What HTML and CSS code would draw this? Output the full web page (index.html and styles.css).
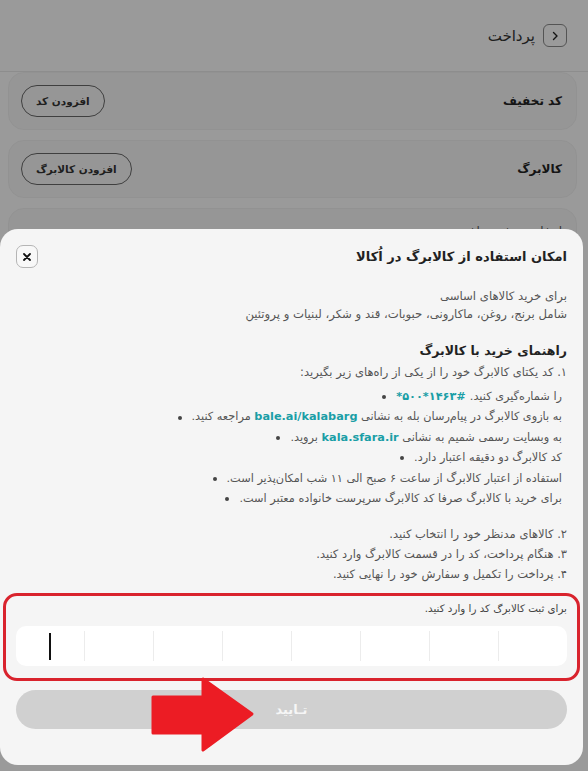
FILE: index.html
```html
<!DOCTYPE html>
<html lang="fa" dir="rtl">
  <head>
    <meta charset="UTF-8" />
    <meta name="viewport" content="width=device-width, initial-scale=1.0" />
    <title>پرداخت</title>
    <link rel="stylesheet" href="styles.css">
  </head>
  <body>
    <!-- صفحه پرداخت پشت پرده -->
    <div class="page">
      <header class="topbar">
        <span class="back">
          <svg width="10" height="10" viewBox="0 0 10 10"><path d="M3.5 1.5 L7 5 L3.5 8.5" fill="none" stroke="#222" stroke-width="1.4" stroke-linecap="round" stroke-linejoin="round"/></svg>
        </span>
        <span class="topbar-title">پرداخت</span>
      </header>
      <div class="card">
        <strong>کد تخفیف</strong>
        <button class="pill">افزودن کد</button>
      </div>
      <div class="card">
        <strong>کالابرگ</strong>
        <button class="pill">افزودن کالابرگ</button>
      </div>
      <div class="card card-top">
        <span class="muted">انتخاب روش پرداخت</span>
      </div>
    </div>

    <div class="overlay"></div>

    <!-- برگه کالابرگ -->
    <section class="sheet" role="dialog" aria-labelledby="sheetTitle">
      <div class="sheet-head">
        <h2 id="sheetTitle">امکان استفاده از کالابرگ در اُکالا</h2>
        <button class="close" aria-label="close">
          <svg width="10" height="10" viewBox="0 0 10 10"><path d="M2 2 L8 8 M8 2 L2 8" stroke="#111" stroke-width="1.8" stroke-linecap="round"/></svg>
        </button>
      </div>

      <p class="intro">برای خرید کالاهای اساسی<br>شامل برنج، روغن، ماکارونی، حبوبات، قند و شکر، لبنیات و پروتئین</p>

      <h3 class="guide-title">راهنمای خرید با کالابرگ</h3>
      <p class="step">۱. کد یکتای کالابرگ خود را از یکی از راه‌های زیر بگیرید:</p>
      <ul class="ways">
        <li><span>را شماره‌گیری کنید.</span><bdo dir="ltr" class="link">*۵۰۰*۱۴۶۳#</bdo><i class="dot"></i></li>
        <li><span>به بازوی کالابرگ در پیام‌رسان بله به نشانی <b class="link">bale.ai/kalabarg</b> مراجعه کنید.</span><i class="dot"></i></li>
        <li><span>به وبسایت رسمی شمیم به نشانی <b class="link">kala.sfara.ir</b> بروید.</span><i class="dot"></i></li>
        <li><span>کد کالابرگ دو دقیقه اعتبار دارد.</span><i class="dot"></i></li>
        <li><span>استفاده از اعتبار کالابرگ از ساعت ۶ صبح الی ۱۱ شب امکان‌پذیر است.</span><i class="dot"></i></li>
        <li><span>برای خرید با کالابرگ صرفا کد کالابرگ سرپرست خانواده معتبر است.</span><i class="dot"></i></li>
      </ul>
      <div class="steps">
        <p class="step">۲. کالاهای مدنظر خود را انتخاب کنید.</p>
        <p class="step">۳. هنگام پرداخت، کد را در قسمت کالابرگ وارد کنید.</p>
        <p class="step">۴. پرداخت را تکمیل و سفارش خود را نهایی کنید.</p>
      </div>

      <div class="code-box">
        <label class="code-label">برای ثبت کالابرگ کد را وارد کنید.</label>
        <div class="code-cells">
          <span class="cell"><i class="caret"></i></span>
          <span class="cell"></span>
          <span class="cell"></span>
          <span class="cell"></span>
          <span class="cell"></span>
          <span class="cell"></span>
          <span class="cell"></span>
          <span class="cell"></span>
        </div>
      </div>

      <button class="confirm" disabled>تـایید</button>

      <!-- فلش قرمز روی دکمه -->
      <svg class="arrow" width="110" height="80" viewBox="0 0 110 80">
        <path d="M3 21 H53 V3 L102 38 L53 74 V57 H3 Z" fill="#ec1c24" stroke="#ec1c24" stroke-width="3" stroke-linejoin="round"/>
      </svg>
    </section>
  </body>
</html>
```

FILE: styles.css
```css
* {
  box-sizing: border-box;
}
body {
  margin: 0;
  background: #f8f8f8;
  font-family: "DejaVu Sans", sans-serif;
  color: #333;
  direction: rtl;
}
button {
  font-family: inherit;
}

/* صفحه زیرین */
.topbar {
  height: 72px;
  display: flex;
  align-items: center;
  gap: 8px;
  padding: 0 21px 0 0;
  border-bottom: 1px solid #e4e4e4;
}
.back {
  width: 24px;
  height: 23px;
  border: 1px solid #888;
  border-radius: 6px;
  display: flex;
  align-items: center;
  justify-content: center;
}
.topbar-title {
  font-size: 15px;
  color: #333;
}
.card {
  height: 58px;
  margin: 0 11px 10px 8px;
  padding: 0 14px 0 12px;
  background: #f3f3f3;
  border: 1px solid #ececec;
  border-radius: 16px;
  display: flex;
  align-items: center;
  justify-content: space-between;
}
.card-top {
  align-items: flex-start;
  padding-top: 15px;
}
.card strong {
  font-size: 12px;
  color: #222;
}
.muted {
  color: #555;
  font-size: 12px;
}
.pill {
  height: 32px;
  padding: 0 14px;
  border: 1px solid #666;
  border-radius: 16px;
  background: transparent;
  font-size: 10.5px;
  font-weight: bold;
  color: #333;
}

.overlay {
  position: fixed;
  inset: 0;
  background: rgba(0, 0, 0, 0.38);
}

/* برگه پایین */
.sheet {
  position: fixed;
  top: 229px;
  left: 0;
  right: 5px;
  height: 536px;
  background: #f5f5f5;
  border-radius: 18px;
  padding: 16px 16px 0 16px;
  color: #555;
}
.sheet-head {
  height: 23px;
  display: flex;
  align-items: center;
  justify-content: space-between;
}
.sheet-head h2 {
  margin: 0;
  font-size: 13px;
  font-weight: bold;
  color: #222;
}
.close {
  width: 22px;
  height: 23px;
  padding: 0;
  border: 1px solid #b5b5b5;
  border-radius: 7px;
  background: #f8f8f8;
  display: flex;
  align-items: center;
  justify-content: center;
}
.intro {
  margin: 19px 0 0 0;
  font-size: 11.7px;
  line-height: 18px;
}
.guide-title {
  margin: 17px 0 0 0;
  font-size: 12.5px;
  line-height: 22px;
  color: #222;
}
.step {
  margin: 0;
  font-size: 11.5px;
  line-height: 20px;
}
.ways {
  list-style: none;
  margin: 5px 5px 0 0;
  padding: 0;
  font-size: 11.3px;
  line-height: 20.4px;
}
.ways li {
  display: flex;
  align-items: center;
  gap: 4px;
}
.ways .dot {
  width: 4px;
  height: 4px;
  margin-right: 6px;
  border-radius: 50%;
  background: #444;
}
.link {
  color: #1a9ea6;
  font-weight: bold;
}
.steps {
  margin-top: 15px;
}

/* کادر قرمز کد */
.code-box {
  margin: 9px -13px 0 -13px;
  border: 3px solid #d9232d;
  border-radius: 14px;
  padding: 4px 10px 12px 10px;
}
.code-label {
  display: block;
  font-size: 10.3px;
  line-height: 16px;
  color: #444;
}
.code-cells {
  margin-top: 10px;
  height: 40px;
  background: #fff;
  border-radius: 10px;
  display: flex;
  direction: ltr;
}
.cell {
  flex: 1;
  margin: 5px 0;
  border-left: 1px solid #ececec;
  display: flex;
  align-items: center;
  justify-content: center;
}
.cell:first-child {
  border-left: none;
}
.caret {
  width: 2px;
  height: 27px;
  background: #111;
}

.confirm {
  display: block;
  width: 100%;
  height: 39px;
  margin-top: 9px;
  border: none;
  border-radius: 20px;
  background: #d0d0d0;
  color: #f6f6f6;
  font-size: 13px;
  font-weight: bold;
}
.arrow {
  position: absolute;
  left: 150px;
  top: 447px;
}
```
